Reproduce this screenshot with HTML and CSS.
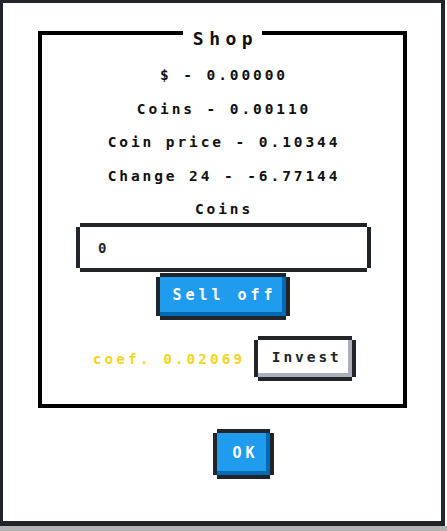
FILE: index.html
```html
<!DOCTYPE html>
<html lang="en">
<head>
<meta charset="utf-8">
<title>Shop</title>
<link rel="stylesheet" href="styles.css">
</head>
<body>
<div class="dialog">
  <fieldset class="panel">
    <legend class="title">Shop</legend>
    <div class="row first">$ - 0.00000</div>
    <div class="row">Coins - 0.00110</div>
    <div class="row">Coin price - 0.10344</div>
    <div class="row">Change 24 - -6.77144</div>
    <div class="row">Coins</div>
    <input class="field" type="text" value="0">
    <button class="btn btn-primary btn-sell" type="button">Sell off</button>
    <div class="invest-row">
      <span class="coef">coef. 0.02069</span>
      <button class="btn btn-plain btn-invest" type="button">Invest</button>
    </div>
  </fieldset>
  <div class="actions">
    <button class="btn btn-primary btn-ok" type="button">OK</button>
  </div>
</div>
<div class="strip"></div>
</body>
</html>
```

FILE: styles.css
```css
html, body {
  margin: 0;
  padding: 0;
  background: #ffffff;
}

body {
  font-family: "DejaVu Sans Mono", "Liberation Mono", monospace;
  font-weight: bold;
  color: #111111;
  width: 447px;
  height: 531px;
  overflow: hidden;
}

.dialog {
  box-sizing: border-box;
  width: 445px;
  border-style: solid;
  border-color: #212529;
  border-width: 3px 4px 5px 3px;
  padding: 14px 34px 46px 35px;
  background: #ffffff;
}

.panel {
  margin: 0;
  padding: 16px 0 27px 0;
  border: 4px solid #000000;
  min-inline-size: 0;
  display: block;
  text-align: center;
}

.title {
  margin: 0 auto;
  padding: 12px 4px 0 10px;
  font-size: 18px;
  line-height: 20px;
  letter-spacing: 5.5px;
  color: #111111;
}

.row {
  font-size: 14.5px;
  line-height: 20px;
  letter-spacing: 2.9px;
  margin-top: 13.5px;
  padding-left: 3px;
}

.row.first {
  margin-top: 0;
}

.field {
  display: block;
  box-sizing: border-box;
  width: 287px;
  height: 41px;
  margin: 8px 0 0 38px;
  padding: 0 0 0 18px;
  border: none;
  outline: none;
  background: #ffffff;
  font-family: "DejaVu Sans Mono", "Liberation Mono", monospace;
  font-weight: bold;
  font-size: 14px;
  letter-spacing: 3px;
  color: #212529;
  box-shadow: 0 -4px 0 #212529, 0 4px 0 #212529, -4px 0 0 #212529, 4px 0 0 #212529;
}

.btn {
  display: block;
  box-sizing: border-box;
  border: none;
  padding: 0;
  font-family: "DejaVu Sans Mono", "Liberation Mono", monospace;
  font-weight: bold;
  cursor: pointer;
}

.btn-primary {
  background: #209cee;
  color: #ffffff;
  font-size: 15px;
  letter-spacing: 4px;
  text-indent: 4px;
  box-shadow: 0 -4px 0 #212529, 0 4px 0 #212529, -4px 0 0 #212529, 4px 0 0 #212529, inset -4px -4px 0 #006bb3;
}

.btn-plain {
  background: #ffffff;
  color: #212529;
  font-size: 14.5px;
  letter-spacing: 2.9px;
  text-indent: 3px;
  box-shadow: 0 -4px 0 #212529, 0 4px 0 #212529, -4px 0 0 #212529, 4px 0 0 #212529, inset -4px -4px 0 #adafbc;
}

.btn-sell {
  width: 126px;
  height: 39px;
  margin: 9px auto 0 auto;
  padding-bottom: 3px;
}

.invest-row {
  display: flex;
  align-items: center;
  justify-content: center;
  margin-top: 24px;
}

.coef {
  color: #f7d51d;
  font-size: 14.5px;
  letter-spacing: 3px;
  line-height: 20px;
  margin-right: 13px;
  padding-top: 1px;
}

.btn-invest {
  width: 94px;
  height: 37px;
  padding-bottom: 3px;
}

.actions {
  display: flex;
  justify-content: center;
  padding-left: 42px;
  margin-top: 25px;
}

.btn-ok {
  width: 53px;
  height: 42px;
  padding-bottom: 3px;
}

.strip {
  height: 5px;
  width: 447px;
  background: #b3b3b3;
}
```
